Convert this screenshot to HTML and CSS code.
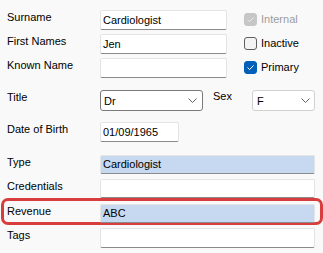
FILE: index.html
```html
<!DOCTYPE html>
<html lang="en">
<head>
    <meta charset="UTF-8">
    <title>Contact Details</title>
    <link rel="stylesheet" href="styles.css">
</head>
<body>
    <div class="form">
        <div class="row r-first">
            <span class="lbl">Surname</span>
            <div class="field w-name">Cardiologist</div>
            <div class="check disabled">
                <span class="box"><svg width="13" height="13" viewBox="0 0 13 13"><path d="M3.5 6.6 L5.6 8.6 L9.6 4.4" /></svg></span>
                Internal
            </div>
        </div>
        <div class="row r-name">
            <span class="lbl">First Names</span>
            <div class="field w-name">Jen</div>
            <div class="check">
                <span class="box"></span>
                Inactive
            </div>
        </div>
        <div class="row r-name">
            <span class="lbl">Known Name</span>
            <div class="field w-name"></div>
            <div class="check on">
                <span class="box"><svg width="13" height="13" viewBox="0 0 13 13"><path d="M3.5 6.6 L5.6 8.6 L9.6 4.4" /></svg></span>
                Primary
            </div>
        </div>

        <div class="row r-title">
            <span class="lbl">Title</span>
            <div class="select sel-title">
                <span>Dr</span>
                <svg width="9" height="5" viewBox="0 0 9 5"><polyline points="0.5,0.5 4.5,4.5 8.5,0.5" /></svg>
            </div>
            <span class="lbl-sex">Sex</span>
            <div class="select sel-sex">
                <span>F</span>
                <svg width="9" height="5" viewBox="0 0 9 5"><polyline points="0.5,0.5 4.5,4.5 8.5,0.5" /></svg>
            </div>
        </div>

        <div class="row r-dob">
            <span class="lbl">Date of Birth</span>
            <div class="field w-date">01/09/1965</div>
        </div>

        <div class="row r-type">
            <span class="lbl">Type</span>
            <div class="field w-wide short picked">Cardiologist</div>
        </div>
        <div class="row r-cred">
            <span class="lbl">Credentials</span>
            <div class="field w-wide short"></div>
        </div>

        <div class="marked">
            <div class="row">
                <span class="lbl">Revenue</span>
                <div class="field w-wide short picked">ABC</div>
            </div>
        </div>

        <div class="row r-tags">
            <span class="lbl">Tags</span>
            <div class="field w-wide"></div>
        </div>
    </div>
</body>
</html>
```

FILE: styles.css
```css
body {
    margin: 0;
    padding: 0;
    background-color: #f9f9f9;
    font-family: 'Liberation Sans', Arial, sans-serif;
    font-size: 11px;
    color: #000;
}

.form {
    padding-top: 10px;
}

.row {
    display: flex;
    align-items: flex-start;
    padding-left: 7px;
}

.r-name {
    margin-top: 4px;
}

.r-title {
    margin-top: 12px;
}

.r-dob {
    margin-top: 11px;
}

.r-type {
    margin-top: 13px;
}

.r-cred {
    margin-top: 5px;
}

.r-tags {
    margin-top: 3px;
}

.lbl {
    width: 93px;
    line-height: 14px;
}

.field {
    box-sizing: border-box;
    height: 20px;
    background-color: #fff;
    border: 1px solid #e4e4e4;
    border-bottom-color: #8a8a8a;
    border-radius: 2px;
    padding: 0 2px;
    line-height: 18px;
    white-space: nowrap;
}

.field.short {
    height: 19px;
    line-height: 17px;
}

.field.picked {
    background-color: #c6d9f0;
}

.w-name {
    width: 127px;
}

.w-date {
    width: 79px;
}

.w-wide {
    width: 215px;
}

/* checkboxes on the right */
.check {
    display: flex;
    align-items: center;
    gap: 4px;
    margin-left: 17px;
    margin-top: 2px;
    line-height: 14px;
}

.check .box {
    box-sizing: border-box;
    width: 13px;
    height: 13px;
    border: 1px solid #5f5f5f;
    border-radius: 3px;
    background-color: #f3f3f3;
    position: relative;
}

.check .box svg {
    position: absolute;
    left: -1px;
    top: -1px;
}

.check .box path {
    fill: none;
    stroke: #fff;
    stroke-width: 1;
}

.check.disabled {
    color: #9c9c9c;
}

.check.disabled .box {
    background-color: #c6c6c6;
    border-color: #c6c6c6;
}

.check.disabled .box path {
    stroke: #ececec;
}

.check.on .box {
    background-color: #005fb8;
    border-color: #005fb8;
}

/* dropdowns */
.select {
    box-sizing: border-box;
    height: 21px;
    display: flex;
    align-items: center;
    justify-content: space-between;
    background-color: #fff;
    border: 1px solid #7a7a7a;
    border-radius: 3px;
    padding: 0 5px 0 3px;
}

.select polyline {
    fill: none;
    stroke: #606060;
    stroke-width: 1;
}

.sel-title {
    width: 103px;
}

.sel-sex {
    width: 63px;
    border-color: #d0d0d0;
    padding-left: 4px;
    padding-right: 4px;
}

.lbl-sex {
    width: 39px;
    margin-left: 10px;
    line-height: 12px;
}

/* red highlight round the revenue row */
.marked {
    box-sizing: border-box;
    width: 322px;
    height: 27px;
    margin-left: 1px;
    border: 3px solid #d93c3c;
    border-radius: 7px;
    padding-top: 3px;
}

.marked .row {
    padding-left: 3px;
}
```
